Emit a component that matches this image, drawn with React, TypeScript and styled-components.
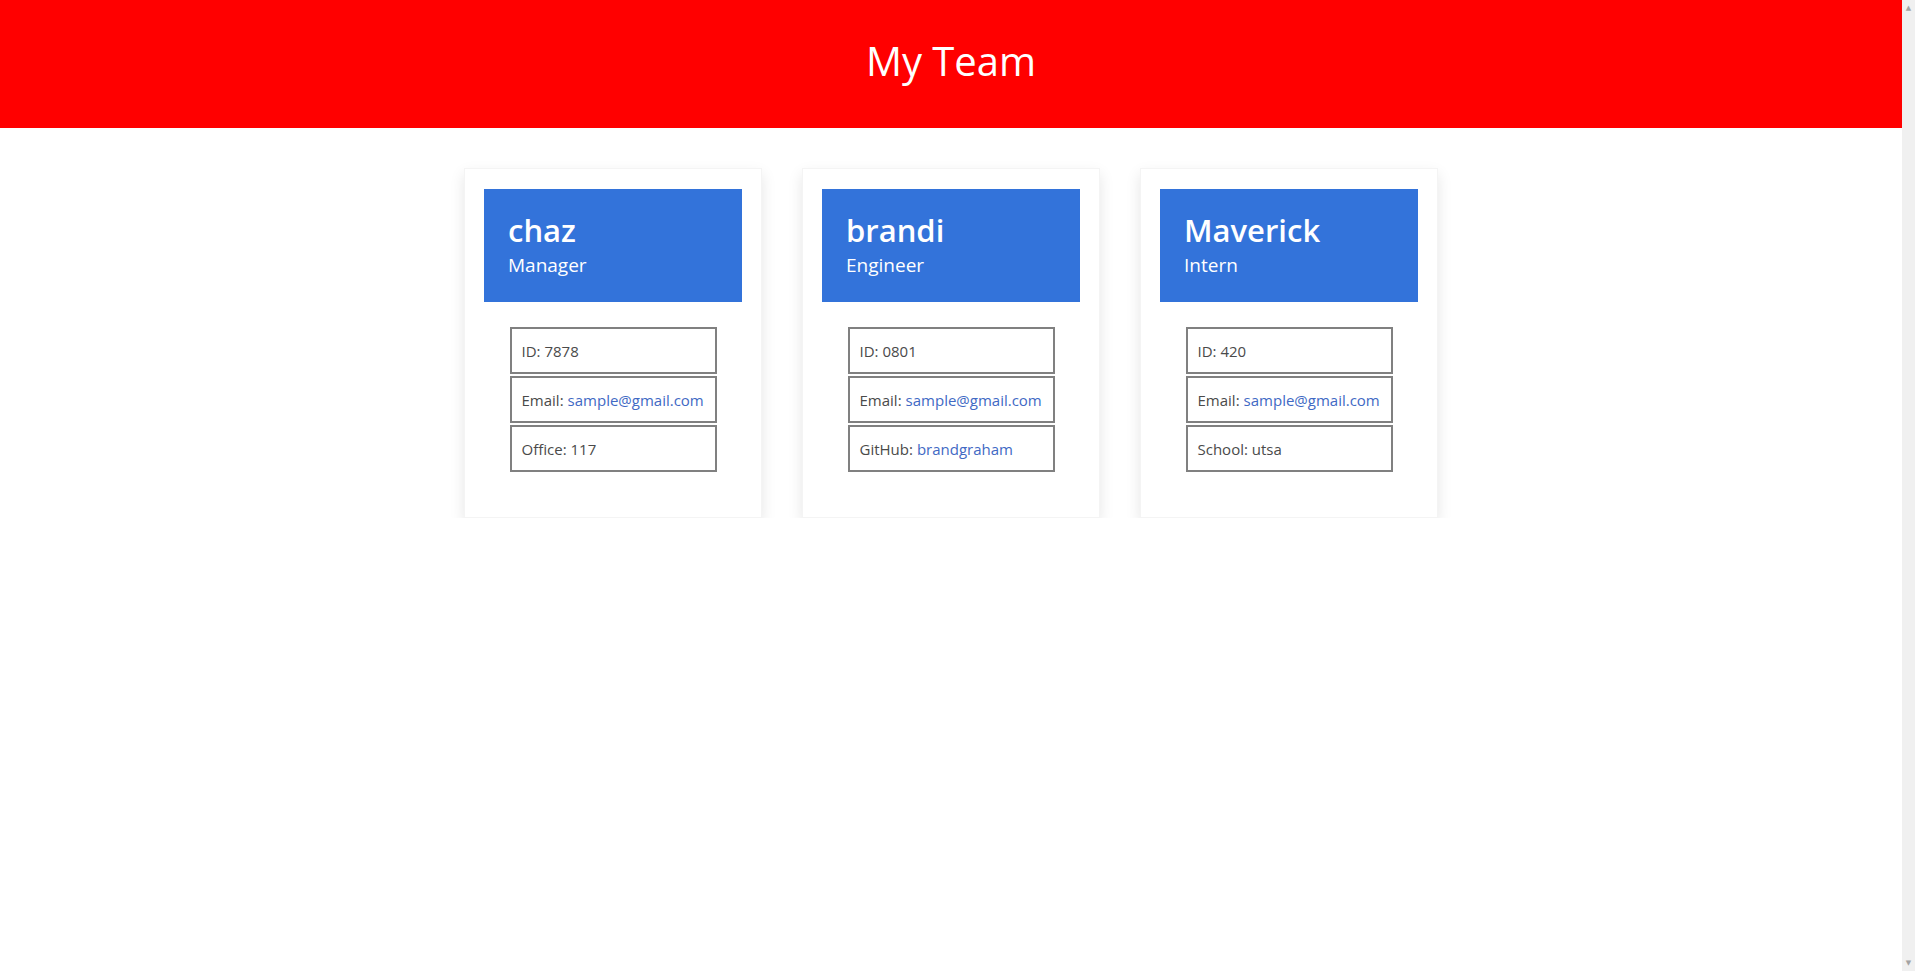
import React from 'react';
import styled, { createGlobalStyle } from 'styled-components';

const GlobalStyle = createGlobalStyle`
    body {
        margin: 0;
        padding-right: 13px;
        background-color: #ffffff;
        font-family: 'Open Sans', 'Noto Sans', sans-serif;
        color: #444444;
    }
`;

// stand-in for the browser scrollbar seen in the screenshot
const ScrollTrack = styled.div`
    position: fixed;
    top: 0;
    right: 0;
    width: 13px;
    height: 100vh;
    background-color: #f0f0f0;
    display: flex;
    flex-direction: column;
    justify-content: space-between;
    align-items: center;
    padding: 4px 0;
    box-sizing: border-box;
    color: #a3a3a3;
    font-size: 7px;
    line-height: 8px;
    font-family: 'DejaVu Sans', sans-serif;
`;

const Header = styled.header`
    height: 128px;
    background-color: #ff0000;
    display: flex;
    justify-content: center;
    box-sizing: border-box;
    padding-top: 37px;
`;

const Title = styled.h1`
    margin: 0;
    font-size: 40px;
    font-weight: 400;
    line-height: 48px;
    color: #ffffff;
`;

const CardRow = styled.main`
    display: flex;
    justify-content: center;
    gap: 40px;
    margin-top: 40px;
`;

const Card = styled.section`
    width: 298px;
    height: 350px;
    box-sizing: border-box;
    padding: 20px;
    background-color: #ffffff;
    border: 1px solid #f4f4f4;
    box-shadow: 0 6px 14px rgba(0, 0, 0, 0.1);
    display: flex;
    flex-direction: column;
    align-items: center;
`;

const CardHeader = styled.div`
    width: 258px;
    height: 113px;
    box-sizing: border-box;
    padding: 22px 24px 0;
    background-color: #3373da;
    color: #ffffff;
    display: flex;
    flex-direction: column;
`;

const Name = styled.h2`
    margin: 0;
    font-size: 31px;
    font-weight: 600;
    line-height: 38px;
`;

const Role = styled.h4`
    margin: 4px 0 0;
    font-size: 19px;
    font-weight: 400;
    line-height: 24px;
`;

const InfoList = styled.ul`
    list-style: none;
    margin: 25px 0 0;
    padding: 0;
    display: flex;
    flex-direction: column;
    gap: 2px;
`;

const InfoItem = styled.li`
    width: 207px;
    height: 47px;
    box-sizing: border-box;
    border: 2px solid #808080;
    padding: 0 10px;
    display: flex;
    align-items: center;
    font-size: 15px;
    color: #4a4a4a;
    white-space: nowrap;
`;

const Link = styled.a`
    color: #4169c4;
    text-decoration: none;
    margin-left: 4px;
`;

type Employee = {
    name: string;
    role: string;
    id: string;
    extraLabel: string;
    extraValue: string;
    extraLink?: boolean;
};

const team: Employee[] = [
    { name: 'chaz', role: 'Manager', id: '7878', extraLabel: 'Office', extraValue: '117' },
    { name: 'brandi', role: 'Engineer', id: '0801', extraLabel: 'GitHub', extraValue: 'brandgraham', extraLink: true },
    { name: 'Maverick', role: 'Intern', id: '420', extraLabel: 'School', extraValue: 'utsa' },
];

const EmployeeCard = ({ person }: { person: Employee }) => (
    <Card>
        <CardHeader>
            <Name>{person.name}</Name>
            <Role>{person.role}</Role>
        </CardHeader>
        <InfoList>
            <InfoItem>ID: {person.id}</InfoItem>
            <InfoItem>
                Email:<Link href="#">sample@gmail.com</Link>
            </InfoItem>
            <InfoItem>
                {person.extraLabel}:
                {person.extraLink ? <Link href="#">{person.extraValue}</Link> : <span>&nbsp;{person.extraValue}</span>}
            </InfoItem>
        </InfoList>
    </Card>
);

const App = () => {
    return (
        <>
            <GlobalStyle />
            <Header>
                <Title>My Team</Title>
            </Header>
            <CardRow>
                {team.map((person) => (
                    <EmployeeCard key={person.name} person={person} />
                ))}
            </CardRow>
            <ScrollTrack>
                <span>▲</span>
                <span>▼</span>
            </ScrollTrack>
        </>
    );
};

export default App;
